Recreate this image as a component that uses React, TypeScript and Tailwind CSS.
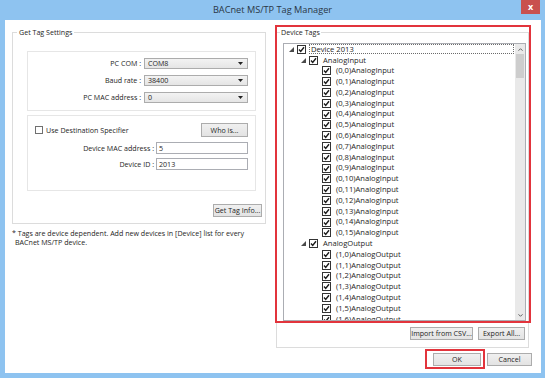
import React from "react";

type Row = {
  level: 0 | 1 | 2;
  label: string;
  expander?: boolean;
  focus?: boolean;
};

const ROWS: Row[] = [
  { level: 0, label: "Device 2013", expander: true, focus: true },
  { level: 1, label: "AnalogInput", expander: true },
  ...Array.from({ length: 16 }, (_, i) => ({
    level: 2 as const,
    label: `(0,${i})AnalogInput`,
  })),
  { level: 1, label: "AnalogOutput", expander: true },
  ...Array.from({ length: 7 }, (_, i) => ({
    level: 2 as const,
    label: `(1,${i})AnalogOutput`,
  })),
];

const INDENT: Record<Row["level"], string> = {
  0: "pl-[5px]",
  1: "pl-[17px]",
  2: "pl-[38px]",
};

function CheckBox({ checked = true }: { checked?: boolean }) {
  return (
    <span className="flex h-[9px] w-[9px] shrink-0 items-center justify-center border border-[#333] bg-white">
      {checked && (
        <svg width="7" height="7" viewBox="0 0 7 7" aria-hidden="true">
          <path
            d="M1 3.6l1.7 1.8L6 1.2"
            fill="none"
            stroke="#1a1a1a"
            strokeWidth="1.4"
          />
        </svg>
      )}
    </span>
  );
}

function Expander() {
  return (
    <svg width="5" height="5" viewBox="0 0 5 5" className="mr-[3px] shrink-0" aria-hidden="true">
      <polygon points="5,0 5,5 0,5" fill="#4a4a4a" />
    </svg>
  );
}

function TreeRow({ row }: { row: Row }) {
  return (
    <div className={`flex h-[10.8px] items-center ${INDENT[row.level]}`}>
      {row.expander && <Expander />}
      <CheckBox />
      <span
        className={`ml-[3px] flex h-[10px] items-center whitespace-nowrap px-[1px] ${
          row.focus ? "mr-[1px] flex-1 border border-dotted border-[#6b6b6b]" : "border border-transparent"
        }`}
      >
        {row.label}
      </span>
    </div>
  );
}

function Combo({ value }: { value: string }) {
  return (
    <div className="flex h-[11px] w-[104px] items-center justify-between border border-[#acacac] bg-gradient-to-b from-[#f3f3f3] to-[#e5e5e5] pl-[3px] pr-[4px]">
      <span>{value}</span>
      <svg width="5" height="3" viewBox="0 0 5 3" aria-hidden="true">
        <polygon points="0,0 5,0 2.5,3" fill="#222" />
      </svg>
    </div>
  );
}

function TextBox({ value }: { value: string }) {
  return (
    <div className="flex h-[12px] w-[92px] items-center border border-[#abadb3] bg-white pl-[2px]">
      {value}
    </div>
  );
}

function Button({ label, className = "" }: { label: string; className?: string }) {
  return (
    <button
      type="button"
      className={`flex h-[13px] items-center justify-center border border-[#acacac] bg-gradient-to-b from-[#f0f0f0] to-[#e3e3e3] text-[#1e1e1e] ${className}`}
    >
      {label}
    </button>
  );
}

export default function App() {
  return (
    <div className="flex h-[378px] w-[545px] flex-col overflow-hidden bg-[#8ec3f0] font-['Open_Sans',sans-serif] text-[7.1px] text-[#1e1e1e]">
      {/* title bar */}
      <div className="grid h-[20px] grid-cols-[1fr_auto_1fr]">
        <div />
        <div className="pt-[3px] text-[9.2px] leading-[14px] text-[#2a3645]">
          BACnet MS/TP Tag Manager
        </div>
        <div className="flex justify-end pr-[5px]">
          <div className="flex h-[14px] w-[19px] items-center justify-center bg-[#c9504e] pb-[1px] text-[9px] font-bold leading-none text-white">
            x
          </div>
        </div>
      </div>

      {/* dialog body */}
      <div className="relative ml-[5px] mr-[4px] flex h-[353px] flex-col bg-white">
        <div className="flex pt-[7px]">
          {/* left side */}
          <div className="ml-[7px] flex w-[254px] flex-col">
            <fieldset className="flex h-[197px] flex-col border border-[#dcdcdc]">
              <legend className="ml-[4px] px-[2px] leading-[10px]">Get Tag Settings</legend>

              <div className="ml-[14px] mt-[14px] flex h-[60px] w-[229px] flex-col gap-[6px] border border-[#e6e6e6] pt-[6px]">
                {[
                  ["PC COM :", "COM8"],
                  ["Baud rate :", "38400"],
                  ["PC MAC address :", "0"],
                ].map(([label, value]) => (
                  <div key={label} className="flex items-center">
                    <span className="w-[116px] pr-[3px] text-right">{label}</span>
                    <Combo value={value} />
                  </div>
                ))}
              </div>

              <div className="ml-[14px] mt-[4px] flex h-[76px] w-[229px] flex-col border border-[#e6e6e6]">
                <div className="mt-[7px] flex items-center">
                  <span className="ml-[7px] h-[8px] w-[8px] border border-[#707070] bg-white" />
                  <span className="ml-[3px]">Use Destination Specifier</span>
                  <Button label="Who is..." className="ml-auto mr-[7px] h-[14px] w-[47px]" />
                </div>
                <div className="mt-[5px] flex items-center">
                  <span className="w-[128px] pr-[2px] text-right">Device MAC address :</span>
                  <TextBox value="5" />
                </div>
                <div className="mt-[4px] flex items-center">
                  <span className="w-[128px] pr-[2px] text-right">Device ID :</span>
                  <TextBox value="2013" />
                </div>
              </div>

              <Button label="Get Tag Info..." className="ml-auto mr-[3px] mt-[13px] w-[49px]" />
            </fieldset>

            <p className="mt-[5px] leading-[9px]">
              * Tags are device dependent. Add new devices in [Device] list for every
              <br />
              <span className="pl-[3px]">BACnet MS/TP device.</span>
            </p>
          </div>

          {/* right side */}
          <fieldset className="ml-[10px] flex h-[321px] w-[253px] flex-col border border-[#dcdcdc]">
            <legend className="ml-[3px] px-[1px] leading-[10px]">Device Tags</legend>

            <div className="ml-[6px] mt-[6px] flex h-[278px] w-[243px] border border-[#abadb3] text-[7.6px]">
              <div className="flex-1 overflow-hidden">
                {ROWS.map((row) => (
                  <TreeRow key={row.label} row={row} />
                ))}
              </div>
              <div className="flex w-[10px] flex-col bg-[#e9e9e9]">
                <div className="flex h-[10px] items-center justify-center">
                  <svg width="5" height="3" viewBox="0 0 5 3" aria-hidden="true">
                    <path d="M0.5 2.7L2.5 0.7l2 2" fill="none" stroke="#606060" strokeWidth="1" />
                  </svg>
                </div>
                <div className="mx-[1px] h-[24px] bg-[#cdcdcd]" />
                <div className="flex-1" />
                <div className="flex h-[10px] items-center justify-center">
                  <svg width="5" height="3" viewBox="0 0 5 3" aria-hidden="true">
                    <path d="M0.5 0.3l2 2 2-2" fill="none" stroke="#606060" strokeWidth="1" />
                  </svg>
                </div>
              </div>
            </div>

            <div className="mr-[3px] mt-[6px] flex justify-end gap-[5px]">
              <Button label="Import from CSV..." className="w-[63px]" />
              <Button label="Export All..." className="w-[47px]" />
            </div>
          </fieldset>
        </div>

        {/* dialog buttons */}
        <div className="mr-[9px] mt-[5px] flex justify-end gap-[6px]">
          <Button label="OK" className="w-[48px]" />
          <Button label="Cancel" className="w-[45px]" />
        </div>

        {/* red highlight annotations */}
        <div className="pointer-events-none absolute left-[270px] top-[5px] h-[298px] w-[256px] border-2 border-[#e2343c]" />
        <div className="pointer-events-none absolute left-[420px] top-[329px] h-[20px] w-[60px] border-2 border-[#e2343c]" />
      </div>
    </div>
  );
}
